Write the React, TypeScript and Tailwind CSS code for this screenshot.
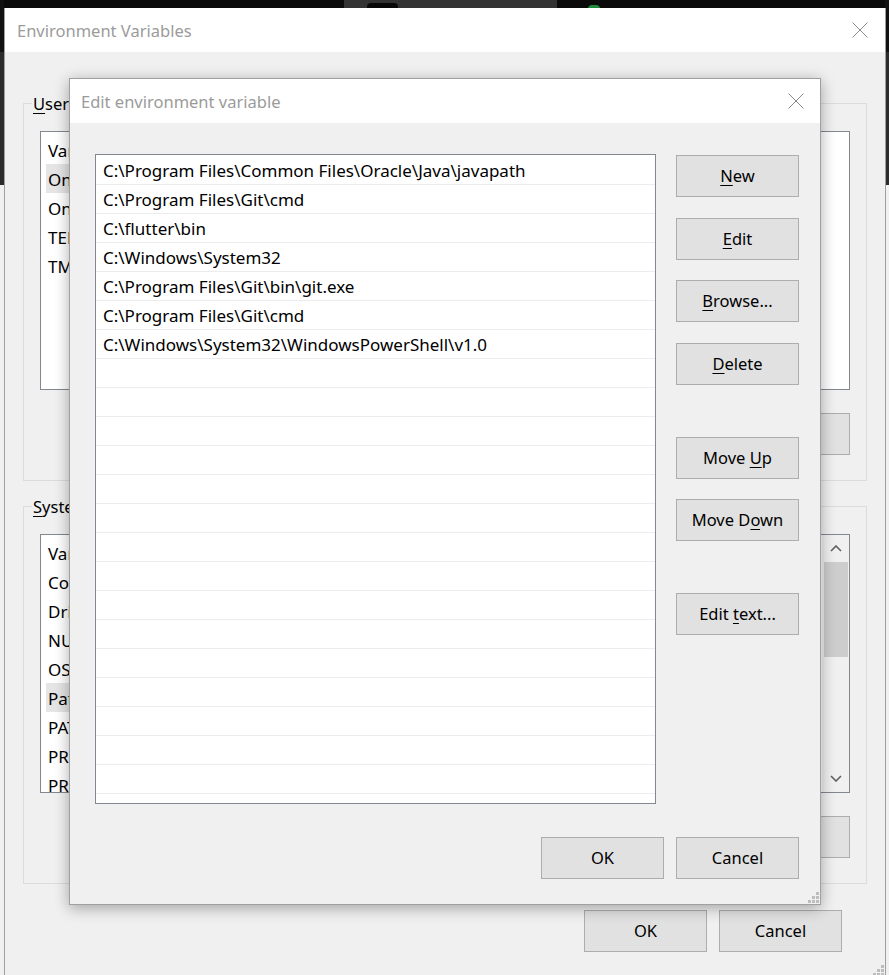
import React from "react";

function CloseX() {
  return (
    <svg width="16" height="16" viewBox="0 0 16 16" className="block">
      <line x1="0.5" y1="0.5" x2="15.5" y2="15.5" stroke="#8a8a8a" strokeWidth="1" />
      <line x1="15.5" y1="0.5" x2="0.5" y2="15.5" stroke="#8a8a8a" strokeWidth="1" />
    </svg>
  );
}

function Grip() {
  const pts: [number, number][] = [
    [8, 0],
    [4, 4],
    [8, 4],
    [0, 8],
    [4, 8],
    [8, 8],
  ];
  return (
    <svg width="11" height="11" viewBox="0 0 11 11" className="block">
      {pts.map(([x, y], i) => (
        <rect key={i} x={x} y={y} width="3" height="3" fill="#bdbdbd" />
      ))}
    </svg>
  );
}

function Btn({ children, className = "" }: { children: React.ReactNode; className?: string }) {
  return (
    <div
      className={`flex h-[42px] w-[123px] shrink-0 items-center justify-center border border-[#adadad] bg-[#e1e1e1] text-[16.5px] leading-none text-black ${className}`}
    >
      <span className="whitespace-pre">{children}</span>
    </div>
  );
}

function U({ children }: { children: React.ReactNode }) {
  return <span className="underline decoration-1 underline-offset-[3px]">{children}</span>;
}

const paths = [
  "C:\\Program Files\\Common Files\\Oracle\\Java\\javapath",
  "C:\\Program Files\\Git\\cmd",
  "C:\\flutter\\bin",
  "C:\\Windows\\System32",
  "C:\\Program Files\\Git\\bin\\git.exe",
  "C:\\Program Files\\Git\\cmd",
  "C:\\Windows\\System32\\WindowsPowerShell\\v1.0",
];

const userVars = [
  ["OneDrive", "C:\\Users\\user\\OneDrive", true],
  ["OneDriveConsumer", "C:\\Users\\user\\OneDrive", false],
  ["TEMP", "%USERPROFILE%\\AppData\\Local\\Temp", false],
  ["TMP", "%USERPROFILE%\\AppData\\Local\\Temp", false],
] as const;

const sysVars = [
  ["ComSpec", "C:\\Windows\\system32\\cmd.exe", false],
  ["DriverData", "C:\\Windows\\System32\\Drivers\\DriverData", false],
  ["NUMBER_OF_PROCESSORS", "8", false],
  ["OS", "Windows_NT", false],
  ["Path", "C:\\Program Files\\Common Files\\Oracle\\Java\\javapath", true],
  ["PATHEXT", ".COM;.EXE;.BAT;.CMD;.VBS;.VBE;.JS;.JSE;.WSF;.WSH;.MSC", false],
  ["PROCESSOR_ARCHITECTURE", "AMD64", false],
  ["PROCESSOR_IDENTIFIER", "Intel64 Family 6 Model 142 Stepping 10", false],
] as const;

function VarList({
  rows,
  scroll,
}: {
  rows: readonly (readonly [string, string, boolean])[];
  scroll?: boolean;
}) {
  return (
    <div className="flex h-[259px] overflow-hidden border border-[#828790] bg-white">
      <div className="flex min-w-0 flex-1 flex-col overflow-hidden">
        <div className="flex h-[32px] shrink-0 items-center pl-[7px] pt-[5px] text-[17px] text-black">
          <span className="w-[260px]">Variable</span>
          <span>Value</span>
        </div>
        {rows.map(([k, v, sel]) => (
          <div
            key={k}
            className="ml-[5px] flex h-[29px] shrink-0 items-center whitespace-nowrap text-[17px] text-black"
          >
            <span className={`w-[255px] pl-[2px] pt-[2px] ${sel ? "bg-[#e5e5e5]" : ""} leading-[27px]`}>{k}</span>
            <span className="pl-[3px] pt-[2px]">{v}</span>
          </div>
        ))}
      </div>
      {scroll && (
        <div className="flex w-[27px] shrink-0 flex-col items-center bg-[#f0f0f0]">
          <div className="flex h-[27px] w-full items-center justify-center">
            <svg width="12" height="7" viewBox="0 0 12 7">
              <polyline points="1,6 6,1 11,6" fill="none" stroke="#606060" strokeWidth="1.6" />
            </svg>
          </div>
          <div className="h-[95px] w-[24px] bg-[#cdcdcd]" />
          <div className="flex-1" />
          <div className="flex h-[27px] w-full items-center justify-center">
            <svg width="12" height="7" viewBox="0 0 12 7">
              <polyline points="1,1 6,6 11,1" fill="none" stroke="#606060" strokeWidth="1.6" />
            </svg>
          </div>
        </div>
      )}
    </div>
  );
}

function GroupBox({
  label,
  rows,
  scroll,
  buttons,
  className = "",
}: {
  label: React.ReactNode;
  rows: readonly (readonly [string, string, boolean])[];
  scroll?: boolean;
  buttons: string[];
  className?: string;
}) {
  return (
    <div className={`relative h-[378px] border border-[#dcdcdc] px-[16px] pt-[27px] ${className}`}>
      <div className="absolute left-[8px] top-[-12px] bg-[#f0f0f0] px-[1px] text-[16.5px] leading-[24px] text-black">
        {label}
      </div>
      <VarList rows={rows} scroll={scroll} />
      <div className="mt-[23px] flex justify-end gap-[13px]">
        {buttons.map((b) => (
          <Btn key={b}>{b}</Btn>
        ))}
      </div>
    </div>
  );
}

export default function App() {
  const listRows = Array.from({ length: 23 }, (_, i) => paths[i] ?? "");
  return (
    <div className="relative h-[975px] w-[889px] overflow-hidden bg-[#f0f0f0] [font-family:'Noto_Sans','Segoe_UI',sans-serif]">
      {/* desktop behind */}
      <div className="absolute left-0 top-0 h-[8px] w-[889px] bg-[#0a0a0a]">
        <div className="absolute left-[344px] top-0 h-[8px] w-[213px] bg-[#333333]">
          <div className="absolute left-[23px] top-[3px] h-[6px] w-[31px] rounded-t-[4px] bg-[#080808]" />
        </div>
        <div className="absolute left-[588px] top-[5px] h-[4px] w-[12px] rounded-t-full bg-[#1f8a3a]" />
      </div>
      <div className="absolute left-0 top-0 h-[52px] w-[4px] bg-[#111111]" />
      <div className="absolute left-0 top-[52px] h-[133px] w-[4px] bg-[#2b2b2b]" />
      <div className="absolute right-0 top-0 h-[52px] w-[4px] bg-[#111111]" />
      <div className="absolute right-0 top-[52px] h-[133px] w-[4px] bg-[#2b2b2b]" />

      {/* Outer window */}
      <div className="absolute left-[4px] top-[8px] flex h-[980px] w-[882px] flex-col border-x border-[#a0a0a0] bg-[#f0f0f0]">
        <div className="flex h-[44px] shrink-0 items-center justify-between bg-white pl-[12px] pr-[17px]">
          <span className="pt-[3px] text-[16.5px] text-[#9b9b9b]">Environment Variables</span>
          <CloseX />
        </div>
        <div className="flex flex-col px-[18px] pt-[51px]">
          <GroupBox
            label={
              <>
                <U>U</U>ser variables for user
              </>
            }
            rows={userVars}
            buttons={["New...", "Edit...", "Delete"]}
          />
          <GroupBox
            className="mt-[25px]"
            label={
              <>
                <U>S</U>ystem variables
              </>
            }
            rows={sysVars}
            scroll
            buttons={["New...", "Edit...", "Delete"]}
          />
          <div className="mt-[26px] flex justify-end gap-[12px] pr-[25px]">
            <Btn>OK</Btn>
            <Btn>Cancel</Btn>
          </div>
        </div>
        <div className="absolute bottom-[12px] right-[1px]">
          <Grip />
        </div>
      </div>

      {/* Inner dialog */}
      <div className="absolute left-[69px] top-[78px] flex h-[827px] w-[752px] flex-col border border-[#a0a0a0] bg-[#f0f0f0] shadow-[0_3px_14px_rgba(0,0,0,0.33)]">
        <div className="flex h-[44px] shrink-0 items-center justify-between bg-white pl-[11px] pr-[16px]">
          <span className="pt-[2px] text-[16.5px] text-[#9b9b9b]">Edit environment variable</span>
          <CloseX />
        </div>
        <div className="flex pl-[25px] pt-[31px]">
          <div className="flex h-[650px] w-[561px] flex-col overflow-hidden border border-[#828790] bg-white pt-[1px]">
            {listRows.map((p, i) => (
              <div
                key={i}
                className="flex h-[29px] shrink-0 items-center whitespace-nowrap border-b border-[#ececec] px-[7px] pt-[2px] text-[17px] text-black"
              >
                {p}
              </div>
            ))}
          </div>
          <div className="ml-[20px] flex flex-col pt-[1px]">
            <Btn>
              <U>N</U>ew
            </Btn>
            <Btn className="mt-[21px]">
              <U>E</U>dit
            </Btn>
            <Btn className="mt-[20px]">
              <U>B</U>rowse...
            </Btn>
            <Btn className="mt-[21px]">
              <U>D</U>elete
            </Btn>
            <Btn className="mt-[52px]">
              Move <U>U</U>p
            </Btn>
            <Btn className="mt-[20px]">
              Move D<U>o</U>wn
            </Btn>
            <Btn className="mt-[52px]">
              Edit <U>t</U>ext...
            </Btn>
          </div>
        </div>
        <div className="mt-[33px] flex justify-end gap-[12px] pr-[21px]">
          <Btn>OK</Btn>
          <Btn>Cancel</Btn>
        </div>
        <div className="absolute bottom-[1px] right-[1px]">
          <Grip />
        </div>
      </div>
    </div>
  );
}
